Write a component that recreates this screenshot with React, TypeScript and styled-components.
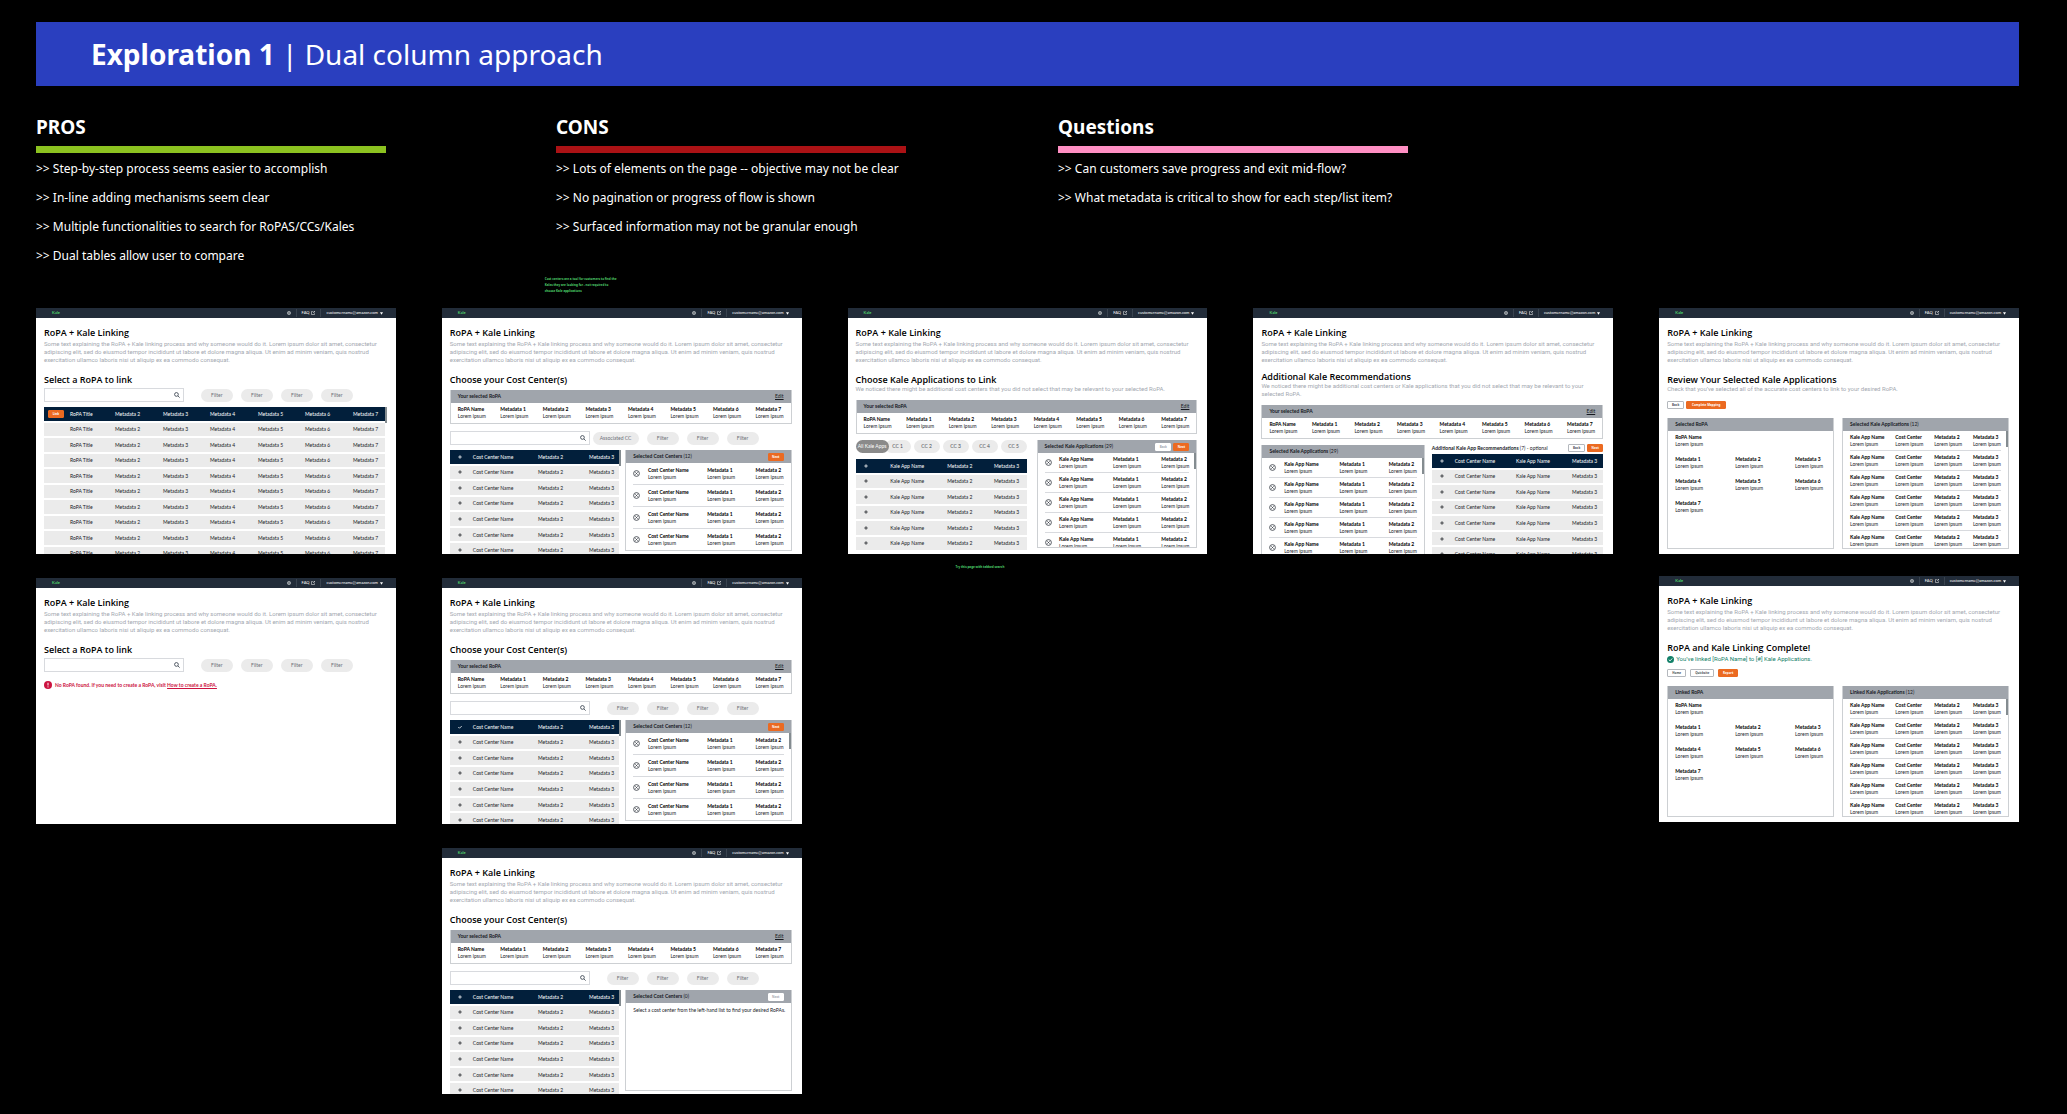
import React from "react";
import styled, { createGlobalStyle } from "styled-components";

const smallText = `font-family: Lato, "Noto Sans", sans-serif; font-size: 5px;`;

const GlobalStyle = createGlobalStyle`
  * { box-sizing: border-box; }
  html, body { margin: 0; background: #000; }
  body, button, input { font-family: "Noto Sans", "Open Sans", sans-serif; }
  h1, h2, h3, p, ul { margin: 0; padding: 0; }
  button { padding: 0; border: 0; background: none; color: inherit; display: block; }
  svg { display: block; flex: none; }
`;

const Page = styled.main`
  min-height: 100vh;
  padding: 22px 48px 20px 36px;
  background: #000;
  color: #fff;
`;

const Banner = styled.header`
  display: flex;
  align-items: center;
  height: 64px;
  padding: 0 55px;
  background: #2a3fbf;
`;

const BannerTitle = styled.h1`
  font-size: 28px;
  font-weight: 400;
  line-height: 62px;
  b { font-weight: 700; }
`;

const Notes = styled.section`
  display: grid;
  grid-template-columns: 520fr 502fr 961fr;
  min-height: 183px;
  padding-top: 28px;
`;

const NoteTitle = styled.h2<{ $bar: string }>`
  max-width: 350px;
  padding-bottom: 6px;
  border-bottom: 7px solid ${(p) => p.$bar};
  font-size: 19px;
  line-height: 26px;
`;

const NoteList = styled.ul`
  list-style: none;
  && { padding-top: 1px; }
  font-size: 12px;
  line-height: 29px;
`;

const Columns = styled.div`
  display: grid;
  grid-template-columns: repeat(5, 1fr);
  column-gap: 46px;
`;

const Column = styled.div<{ $gap?: number }>`
  display: flex;
  flex-direction: column;
  gap: ${(p) => p.$gap ?? 24}px;
  min-width: 0;
`;

const Comments = styled(Columns)`
  margin-top: 6px;
  padding-bottom: 14px;
`;

const Comment = styled.p<{ $column?: number }>`
  grid-column: ${(p) => p.$column ?? "auto"};
  && { padding-left: 103px; }
  color: #4fd36c;
  font-size: 3px;
  font-weight: 700;
  line-height: 6px;
`;

const CardComment = styled(Comment)`
  && { margin-top: -14px; padding-left: 108px; }
`;

const Frame = styled.article`
  height: 246px;
  overflow: hidden;
  background: #fff;
  color: #16191f;
`;

const TopBar = styled.nav`
  display: flex;
  align-items: center;
  height: 10px;
  padding: 0 13px 0 16px;
  background: #222c39;
  color: #fff;
  font-family: Lato, "Noto Sans", sans-serif;
  font-size: 4px;
  line-height: 10px;
  a { color: inherit; text-decoration: none; }
`;

const Brand = styled.a`
  margin-right: auto;
  && { color: #4fd36c; }
  font-weight: 700;
`;

const TopItem = styled.div`
  display: flex;
  align-items: center;
  gap: 2px;
  height: 8px;
  padding: 0 5px;
  border-right: 1px solid #39434f;
  &:last-child { border: 0; padding-right: 0; }
`;

const Body = styled.div`
  padding: 9px 10px 0 8px;
`;

const FrameTitle = styled.h2`
  font-family: "Open Sans", "Noto Sans", sans-serif;
  font-size: 9px;
  font-weight: 600;
  line-height: 12px;
  color: #000;
`;

const Copy = styled.p`
  && { margin-top: 1px; }
  color: #a3a8b0;
  font-family: Roboto, "Noto Sans", sans-serif;
  font-size: 6px;
  line-height: 8px;
`;

const SectionTitle = styled.h3<{ $tight?: boolean }>`
  && { margin-top: ${(p) => (p.$tight ? 7 : 10)}px; }
  font-family: "Open Sans", "Noto Sans", sans-serif;
  font-size: 9px;
  font-weight: 600;
  line-height: 12px;
  color: #000;
`;

const Lead = styled.p<{ $success?: boolean }>`
  display: flex;
  align-items: center;
  gap: 2px;
  && { margin-top: -1px; padding-top: ${(p) => (p.$success ? 2 : 0)}px; }
  color: ${(p) => (p.$success ? "#128068" : "#a3a8b0")};
  font-family: Roboto, "Noto Sans", sans-serif;
  font-size: 6px;
  line-height: 8px;
`;

const Toolbar = styled.div<{ $top: number }>`
  display: flex;
  align-items: center;
  justify-content: space-between;
  margin-top: ${(p) => p.$top}px;
  padding-right: 33px;
`;

const SearchBox = styled.label`
  display: flex;
  align-items: center;
  width: 140px;
  height: 14px;
  padding: 0 3px;
  border: 1px solid #d8dade;
  color: #222c39;
  input {
    flex: 1;
    min-width: 0;
    height: 10px;
    padding: 0;
    border: 0;
    outline: 0;
    background: none;
    font-size: 5px;
  }
`;

const Filters = styled.div`
  display: flex;
  gap: 8px;
`;

const Pill = styled.button<{ $wide?: boolean }>`
  width: ${(p) => (p.$wide ? 46 : 32)}px;
  height: 13px;
  border-radius: 7px;
  background: #ebebeb;
  color: #6b7078;
  ${smallText}
  line-height: 13px;
`;

const Tabs = styled.div`
  display: flex;
  gap: 3px;
  overflow: hidden;
  margin-bottom: 6px;
`;

const Tab = styled.button<{ $active?: boolean }>`
  position: relative;
  z-index: ${(p) => (p.$active ? 1 : 0)};
  flex: none;
  width: ${(p) => (p.$active ? 33 : 26)}px;
  height: 13px;
  margin-right: ${(p) => (p.$active ? -7 : 0)}px;
  border-radius: 7px;
  background: ${(p) => (p.$active ? "#8a8a8a" : "#ebebeb")};
  color: ${(p) => (p.$active ? "#fff" : "#4b5058")};
  ${smallText}
  line-height: 13px;
`;

const TableWrap = styled.div<{ $top?: number }>`
  display: flex;
  margin-top: ${(p) => p.$top ?? 0}px;
`;

const Thumb = styled.i`
  flex: none;
  width: 2px;
  height: 16px;
  background: #848c90;
`;

const Table = styled.table<{ $height: number }>`
  flex: 1;
  width: 100%;
  height: ${(p) => p.$height}px;
  table-layout: fixed;
  border-spacing: 0;
  td {
    padding: 0;
    border-bottom: 2px solid #fff;
    background: #ebebeb;
    ${smallText}
    line-height: 8px;
    white-space: nowrap;
  }
  tr:first-child td { background: #021f3b; color: #fff; }
`;

const RowIcon = styled.button`
  width: 6px;
  margin-left: 8px;
`;

const Action = styled.button<{ $kind?: "primary" | "plain" | "off"; $w: number }>`
  width: ${(p) => p.$w}px;
  height: 8px;
  border: 1px solid ${(p) => (p.$kind === "primary" ? "#eb6a21" : p.$kind === "off" ? "#fff" : "#b4b8bd")};
  border-radius: 1px;
  background: ${(p) => (p.$kind === "primary" ? "#eb6a21" : "#fff")};
  color: ${(p) => (p.$kind === "primary" ? "#fff" : p.$kind === "off" ? "#a3a8b0" : "#4b5058")};
  font-size: 3px;
  font-weight: 700;
  line-height: 6px;
`;

const RowAction = styled(Action)`
  margin-left: 4px;
`;

const Actions = styled.div<{ $gap?: number }>`
  display: flex;
  gap: ${(p) => p.$gap ?? 2}px;
`;

const ActionBar = styled(Actions)<{ $top: number }>`
  margin: ${(p) => p.$top}px 0 9px;
`;

const Panel = styled.section<{ $height?: number; $top?: number }>`
  position: relative;
  height: ${(p) => (p.$height ? p.$height + "px" : "auto")};
  margin-top: ${(p) => p.$top ?? 0}px;
  overflow: hidden;
  border: 1px solid #cdd0d3;
  border-top: 0;
`;

const PanelHead = styled.header`
  display: flex;
  align-items: center;
  justify-content: space-between;
  height: 13px;
  margin: 0 -1px;
  padding: 0 8px;
  background: #a0a5ac;
  color: #16191f;
  ${smallText}
  line-height: 13px;
  h3 { font-size: 5px; font-weight: 700; }
  h3 span { font-weight: 400; }
  a { color: inherit; }
`;

/* Scroll thumb lying over the right border of a panel */
const PanelThumb = styled(Thumb)`
  position: absolute;
  top: 13px;
  right: 0;
`;

const Summary = styled.div`
  display: flex;
  justify-content: space-between;
  padding: 3px 7px;
`;

const Field = styled.div`
  ${smallText}
  line-height: 7px;
  white-space: nowrap;
  b { display: block; color: #000; }
`;

const Split = styled.div<{ $cols: string; $gap: number; $top: number }>`
  display: grid;
  grid-template-columns: ${(p) => p.$cols};
  column-gap: ${(p) => p.$gap}px;
  align-items: start;
  margin-top: ${(p) => p.$top}px;
`;

const Items = styled.ul`
  list-style: none;
  && { padding: 0 7px; }
`;

const Item = styled.li<{ $cols: string; $height: number }>`
  display: grid;
  grid-template-columns: ${(p) => p.$cols};
  justify-content: space-between;
  align-items: center;
  height: ${(p) => p.$height}px;
  border-bottom: 1px solid #d8dade;
`;

const Details = styled.div`
  display: grid;
  grid-template-columns: 60fr 60fr 31fr;
  row-gap: 8px;
  padding: 3px 7px;
`;

const DetailName = styled(Field)`
  grid-column: 1 / -1;
`;

const ListHead = styled.div`
  display: flex;
  align-items: center;
  justify-content: space-between;
  height: 8px;
  margin-bottom: 2px;
  ${smallText}
  h3 { font-size: 5px; white-space: nowrap; }
  span { font-weight: 400; }
`;

const ErrorText = styled.p`
  display: flex;
  align-items: center;
  gap: 3px;
  && { margin-top: 9px; }
  color: #cc1340;
  ${smallText}
  font-weight: 700;
  line-height: 8px;
  a { color: inherit; }
`;

const Hint = styled.p`
  && { padding: 3px 7px; }
  ${smallText}
  line-height: 8px;
  white-space: nowrap;
`;

const Gear = () => (
  <svg width="4" height="4" viewBox="0 0 16 16" fill="none" stroke="currentColor" strokeWidth="2">
    <circle cx="8" cy="8" r="6.5" />
    <circle cx="8" cy="8" r="2.5" />
  </svg>
);

const External = () => (
  <svg width="4" height="4" viewBox="0 0 16 16" fill="none" stroke="currentColor" strokeWidth="2">
    <path d="M7 2H2v12h12V9M10 1h5v5M15 1L8 8" />
  </svg>
);

const Caret = () => (
  <svg width="3" height="3" viewBox="0 0 10 10" fill="currentColor">
    <path d="M0 1h10L5 9z" />
  </svg>
);

const Magnifier = () => (
  <svg width="6" height="6" viewBox="0 0 16 16" fill="none" stroke="currentColor" strokeWidth="2">
    <circle cx="6.5" cy="6.5" r="5" />
    <path d="M10.5 10.5L15 15" />
  </svg>
);

const Plus = () => (
  <svg width="4" height="4" viewBox="0 0 16 16" fill="none" stroke="currentColor" strokeWidth="3">
    <path d="M8 1v14M1 8h14" />
  </svg>
);

const Tick = () => (
  <svg width="4" height="4" viewBox="0 0 16 16" fill="none" stroke="currentColor" strokeWidth="3">
    <path d="M1 8l5 5 9-9" />
  </svg>
);

const Remove = () => (
  <svg width="7" height="7" viewBox="0 0 16 16" fill="none" stroke="#3f454d" strokeWidth="2">
    <circle cx="8" cy="8" r="6.6" />
    <path d="M5.4 5.4l5.2 5.2M10.6 5.4l-5.2 5.2" />
  </svg>
);

const Success = () => (
  <svg width="7" height="7" viewBox="0 0 16 16">
    <circle cx="8" cy="8" r="8" fill="#128068" />
    <path d="M4 8.4l3 2.8 5-5.6" fill="none" stroke="#fff" strokeWidth="2" />
  </svg>
);

const Alert = () => (
  <svg width="8" height="8" viewBox="0 0 16 16">
    <circle cx="8" cy="8" r="8" fill="#cc1340" />
    <path d="M8 3.5v5.5M8 10.8v2" stroke="#fff" strokeWidth="2" />
  </svg>
);

const Screen = ({ children }: { children: React.ReactNode }) => (
  <Frame>
    <TopBar>
      <Brand href="#">Kale</Brand>
      <TopItem><Gear /></TopItem>
      <TopItem><a href="#">FAQ</a><External /></TopItem>
      <TopItem><a href="#">customername@amazon.com</a><Caret /></TopItem>
    </TopBar>
    <Body>
      <FrameTitle>RoPA + Kale Linking</FrameTitle>
      <Copy>
        Some text explaining the RoPA + Kale linking process and why someone would do it. Lorem ipsum dolor sit amet,
        consectetur adipiscing elit, sed do eiusmod tempor incididunt ut labore et dolore magna aliqua. Ut enim ad
        minim veniam, quis nostrud exercitation ullamco laboris nisi ut aliquip ex ea commodo consequat.
      </Copy>
      {children}
    </Body>
  </Frame>
);

const SearchRow = ({ top, first }: { top: number; first?: string }) => (
  <Toolbar $top={top}>
    <SearchBox>
      <input type="search" aria-label="Search" />
      <Magnifier />
    </SearchBox>
    <Filters>
      <Pill $wide={!!first}>{first ?? "Filter"}</Pill>
      <Pill>Filter</Pill>
      <Pill>Filter</Pill>
      <Pill>Filter</Pill>
    </Filters>
  </Toolbar>
);

const Rows = ({ cols, cells, count, height, lead }: {
  cols: number[]; cells: string[]; count: number; height: number; lead: (row: number) => React.ReactNode;
}) => (
  <Table $height={height}>
    <colgroup>{cols.map((w, i) => <col key={i} width={w} />)}</colgroup>
    <tbody>
      {Array.from({ length: count }, (_, r) => (
        <tr key={r}>
          <td>{lead(r)}</td>
          {cells.map((c) => <td key={c}>{c}</td>)}
        </tr>
      ))}
    </tbody>
  </Table>
);

const addIcon = (checked?: boolean) => (row: number) => (
  <RowIcon aria-label="Add">{checked && row === 0 ? <Tick /> : <Plus />}</RowIcon>
);

const Pair = ({ name }: { name: string }) => (
  <Field><b>{name}</b>Lorem ipsum</Field>
);

const SelectedRopa = ({ top }: { top: number }) => (
  <Panel $top={top} $height={34}>
    <PanelHead><h3>Your selected RoPA</h3><a href="#">Edit</a></PanelHead>
    <Summary>
      <Pair name="RoPA Name" />
      {[1, 2, 3, 4, 5, 6, 7].map((n) => <Pair key={n} name={`Metadata ${n}`} />)}
    </Summary>
  </Panel>
);

const ItemList = ({ names, count, height, cols, removable }: {
  names: string[]; count: number; height: number; cols: string; removable?: boolean;
}) => (
  <Items>
    {Array.from({ length: count }, (_, i) => (
      <Item key={i} $cols={cols} $height={height}>
        {removable && <button aria-label="Remove"><Remove /></button>}
        {names.map((n) => <Pair key={n} name={n} />)}
      </Item>
    ))}
  </Items>
);

const SelectRopa = ({ found }: { found: boolean }) => (
  <Screen>
    <SectionTitle>Select a RoPA to link</SectionTitle>
    <SearchRow top={2} />
    {found ? (
      <TableWrap $top={5}>
        <Rows
          cols={[26, 45, 48, 47, 48, 47, 48, 32]}
          cells={["RoPA Title", ...[2, 3, 4, 5, 6, 7].map((n) => `Metadata ${n}`)]}
          count={10}
          height={155}
          lead={(r) => (r === 0 ? <RowAction $kind="primary" $w={16}>Link</RowAction> : null)}
        />
        <Thumb />
      </TableWrap>
    ) : (
      <ErrorText>
        <Alert />
        <span>No RoPA found. If you need to create a RoPA, visit <a href="#">How to create a RoPA.</a></span>
      </ErrorText>
    )}
  </Screen>
);

const CostCenters = ({ filter, checked, empty, thumb }: {
  filter?: string; checked?: boolean; empty?: boolean; thumb?: boolean;
}) => (
  <Screen>
    <SectionTitle>Choose your Cost Center(s)</SectionTitle>
    <SelectedRopa top={4} />
    <SearchRow top={7} first={filter} />
    <Split $cols="171fr 166fr" $gap={4} $top={5}>
      <TableWrap>
        <Rows
          cols={[23, 65, 51, 30]}
          cells={["Cost Center Name", "Metadata 2", "Metadata 3"]}
          count={7}
          height={109}
          lead={addIcon(checked)}
        />
        <Thumb />
      </TableWrap>
      <Panel $height={101}>
        <PanelHead>
          <h3>Selected Cost Centers <span>({empty ? 0 : 12})</span></h3>
          <Action $kind={empty ? "off" : "primary"} $w={16}>Next</Action>
        </PanelHead>
        {empty ? (
          <Hint>Select a cost center from the left-hand list to find your desired RoPAs.</Hint>
        ) : (
          <ItemList names={["Cost Center Name", "Metadata 1", "Metadata 2"]} count={4} height={22} cols="15fr 60fr 49fr 27fr" removable />
        )}
        {thumb && <PanelThumb />}
      </Panel>
    </Split>
  </Screen>
);

const kaleItems = ["Kale App Name", "Metadata 1", "Metadata 2"];

const KaleApps = () => (
  <Screen>
    <SectionTitle>Choose Kale Applications to Link</SectionTitle>
    <Lead>We noticed there might be additional cost centers that you did not select that may be relevant to your selected RoPA.</Lead>
    <SelectedRopa top={7} />
    <Split $cols="168fr 163fr" $gap={10} $top={6}>
      <div>
        <Tabs>
          <Tab $active>All Kale Apps</Tab>
          {[1, 2, 3, 4, 5].map((n) => <Tab key={n}>CC {n}</Tab>)}
        </Tabs>
        <Rows cols={[34, 56, 46, 32]} cells={["Kale App Name", "Metadata 2", "Metadata 3"]} count={6} height={93} lead={addIcon()} />
      </div>
      <Panel $height={108}>
        <PanelHead>
          <h3>Selected Kale Applications <span>(29)</span></h3>
          <Actions><Action $kind="off" $w={16}>Back</Action><Action $kind="primary" $w={16}>Next</Action></Actions>
        </PanelHead>
        <ItemList names={kaleItems} count={5} height={20} cols="15fr 56fr 50fr 27fr" removable />
        <PanelThumb />
      </Panel>
    </Split>
  </Screen>
);

const Recommendations = () => (
  <Screen>
    <SectionTitle $tight>Additional Kale Recommendations</SectionTitle>
    <Lead>We noticed there might be additional cost centers or Kale applications that you did not select that may be relevant to your selected RoPA.</Lead>
    <SelectedRopa top={7} />
    <Split $cols="163fr 171fr" $gap={7} $top={5}>
      <Panel $height={120} $top={1}>
        <PanelHead><h3>Selected Kale Applications <span>(29)</span></h3></PanelHead>
        <ItemList names={kaleItems} count={5} height={20} cols="15fr 56fr 50fr 27fr" removable />
        <PanelThumb />
      </Panel>
      <div>
        <ListHead>
          <h3>Additional Kale App Recommendations <span>(7) - optional</span></h3>
          <Actions><Action $w={17}>Back</Action><Action $kind="primary" $w={16}>Next</Action></Actions>
        </ListHead>
        <Rows cols={[23, 61, 56, 31]} cells={["Cost Center Name", "Kale App Name", "Metadata 3"]} count={7} height={109} lead={addIcon()} />
      </div>
    </Split>
  </Screen>
);

const Overview = ({ left, right }: { left: string; right: string }) => (
  <Split $cols="1fr 1fr" $gap={8} $top={0}>
    <Panel $height={131}>
      <PanelHead><h3>{left}</h3></PanelHead>
      <Details>
        <DetailName><b>RoPA Name</b>Lorem ipsum</DetailName>
        {[1, 2, 3, 4, 5, 6, 7].map((n) => <Pair key={n} name={`Metadata ${n}`} />)}
      </Details>
    </Panel>
    <Panel $height={131}>
      <PanelHead><h3>{right} <span>(12)</span></h3></PanelHead>
      <ItemList names={["Kale App Name", "Cost Center", "Metadata 2", "Metadata 3"]} count={6} height={20} cols="repeat(4, auto)" />
      <PanelThumb />
    </Panel>
  </Split>
);

const Review = () => (
  <Screen>
    <SectionTitle>Review Your Selected Kale Applications</SectionTitle>
    <Lead>Check that you’ve selected all of the accurate cost centers to link to your desired RoPA.</Lead>
    <ActionBar $top={8}><Action $w={17}>Back</Action><Action $kind="primary" $w={40}>Complete Mapping</Action></ActionBar>
    <Overview left="Selected RoPA" right="Selected Kale Applications" />
  </Screen>
);

const Complete = () => (
  <Screen>
    <SectionTitle>RoPA and Kale Linking Complete!</SectionTitle>
    <Lead $success><Success />You’ve linked [RoPA Name] to [#] Kale Applications.</Lead>
    <ActionBar $top={6} $gap={4}>
      <Action $w={19}>Home</Action>
      <Action $w={24}>Quicksite</Action>
      <Action $kind="primary" $w={20}>Report</Action>
    </ActionBar>
    <Overview left="Linked RoPA" right="Linked Kale Applications" />
  </Screen>
);

const notes = [
  {
    title: "PROS",
    bar: "#8cc220",
    lines: [
      "Step-by-step process seems easier to accomplish",
      "In-line adding mechanisms seem clear",
      "Multiple functionalities to search for RoPAS/CCs/Kales",
      "Dual tables allow user to compare",
    ],
  },
  {
    title: "CONS",
    bar: "#ab1215",
    lines: [
      "Lots of elements on the page -- objective may not be clear",
      "No pagination or progress of flow is shown",
      "Surfaced information may not be granular enough",
    ],
  },
  {
    title: "Questions",
    bar: "#ff8fc3",
    lines: [
      "Can customers save progress and exit mid-flow?",
      "What metadata is critical to show for each step/list item?",
    ],
  },
];

export default function App() {
  return (
    <Page>
      <GlobalStyle />
      <Banner>
        <BannerTitle><b>Exploration 1</b> | Dual column approach</BannerTitle>
      </Banner>
      <Notes>
        {notes.map((n) => (
          <div key={n.title}>
            <NoteTitle $bar={n.bar}>{n.title}</NoteTitle>
            <NoteList>{n.lines.map((l) => <li key={l}>&gt;&gt; {l}</li>)}</NoteList>
          </div>
        ))}
      </Notes>
      <Comments>
        <Comment $column={2}>
          Cost centers are a tool for customers to find the
          <br />
          Kales they are looking for - not required to
          <br />
          choose Kale applications
        </Comment>
      </Comments>
      <Columns>
        <Column><SelectRopa found /><SelectRopa found={false} /></Column>
        <Column>
          <CostCenters filter="Associated CC" />
          <CostCenters checked thumb />
          <CostCenters empty />
        </Column>
        <Column><KaleApps /><CardComment>Try this page with tabbed search</CardComment></Column>
        <Column><Recommendations /></Column>
        <Column $gap={22}><Review /><Complete /></Column>
      </Columns>
    </Page>
  );
}
